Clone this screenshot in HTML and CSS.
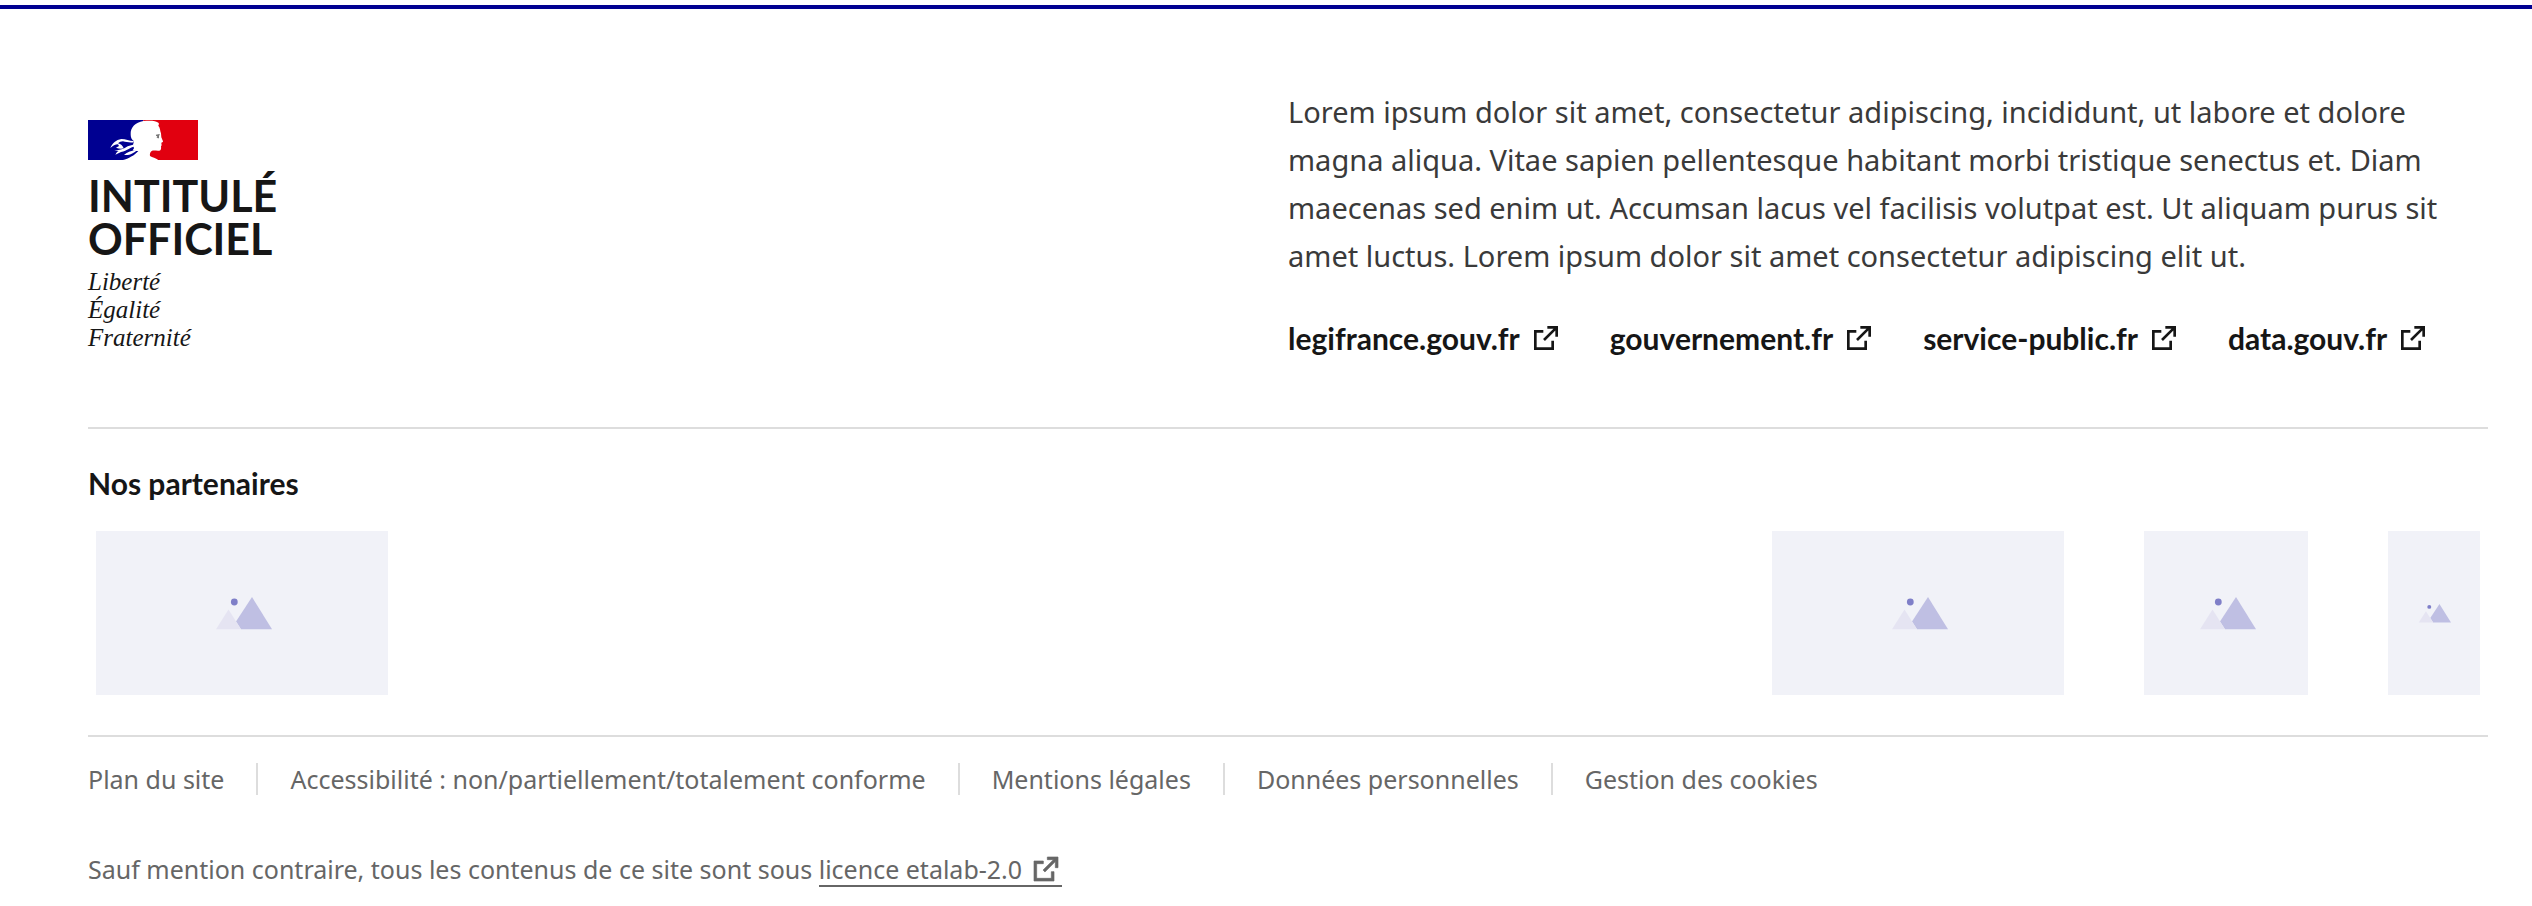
FILE: index.html
```
<!DOCTYPE html>
<html lang="fr">
<head>
<meta charset="utf-8">
<title>Intitulé officiel</title>
<link rel="stylesheet" href="styles.css">
</head>
<body>
<svg class="defs" aria-hidden="true">
  <symbol id="external" viewBox="0 0 24 24"><path d="M10 6v2H5v11h11v-5h2v7H3V6h7zm11-3v8h-2V6.4l-7.8 7.8-1.4-1.4L17.6 5H13V3h8z"/></symbol>
  <symbol id="mountains" viewBox="-3 0 59 33">
    <path fill="#bfbfe3" d="M36 0 56 32.300H25L20 24.500z"/>
    <path fill="#e5e4f2" d="M12.500 12.500 25 32.300H0z"/>
    <circle fill="#7f7fc8" cx="18.300" cy="5" r="3.400"/>
  </symbol>
</svg>
<footer class="footer">
  <div class="container">
    <div class="body">
      <a class="brand" href="#">
        <svg class="flag" viewBox="0 0 330 120" aria-hidden="true">
          <path fill="#000091" d="M0 0h166v120H0z"/>
          <path fill="#e1000f" d="M166 0h164v120H166z"/>
          <path fill="#fff" d="M128 43C127 22 142 7 166 3 184 1 204 1 212 9c2 4-1 7-1 8 6 6 5 16 8 23 1 4 0 8 1 12l5 12c0 4-4 3-5 5l1 7-2 3c1 8 0 12-5 13-9 1-17-2-23 1-5 4-6 9-5 15 7 4 17 7 25 12H105c16-4 35-14 46-27-6 0-12 1-17-2l4-6-3-11 3-10c-8-5-10-13-10-21z"/>
          <path fill="#fff" d="M67 84C73 70 84 59 100 57c13 0 24 6 37 6v4c-12 2-22-1-32-3-6 0-11 2-15 6 9 2 14 7 17 15-7 2-15 1-23-2l9-5-3-5c-8 0-16 5-23 11z"/>
          <path fill="#fff" d="M79 91c16 0 29-4 40-12l16-5 7 5c-14 2-24 14-43 17l-17 8 5-8 5-3zM108 105c9-9 24-14 40-15-11 9-22 17-40 15z"/>
          <path fill="none" stroke="#777" stroke-width="4" d="m204 46 11-2m-8 9 4-5v7"/>
        </svg>
        <span class="brand-name">INTITULÉ<br>OFFICIEL</span>
        <span class="motto">Liberté<br>Égalité<br>Fraternité</span>
      </a>
      <div class="content">
        <p class="desc">Lorem ipsum dolor sit amet, consectetur adipiscing, incididunt, ut labore et dolore magna aliqua. Vitae sapien pellentesque habitant morbi tristique senectus et. Diam maecenas sed enim ut. Accumsan lacus vel facilisis volutpat est. Ut aliquam purus sit amet luctus. Lorem ipsum dolor sit amet consectetur adipiscing elit ut.</p>
        <ul class="sites">
          <li><a href="#">legifrance.gouv.fr<svg class="icon"><use href="#external"/></svg></a></li>
          <li><a href="#">gouvernement.fr<svg class="icon"><use href="#external"/></svg></a></li>
          <li><a href="#">service-public.fr<svg class="icon"><use href="#external"/></svg></a></li>
          <li><a href="#">data.gouv.fr<svg class="icon"><use href="#external"/></svg></a></li>
        </ul>
      </div>
    </div>
    <section class="partners">
      <h2>Nos partenaires</h2>
      <div class="logos">
        <a class="logo wide main" href="#" aria-label="Partenaire principal"><svg><use href="#mountains"/></svg></a>
        <a class="logo wide" href="#" aria-label="Partenaire"><svg><use href="#mountains"/></svg></a>
        <a class="logo square" href="#" aria-label="Partenaire"><svg><use href="#mountains"/></svg></a>
        <a class="logo narrow" href="#" aria-label="Partenaire"><svg><use href="#mountains"/></svg></a>
      </div>
    </section>
    <div class="bottom">
      <ul class="legal">
        <li><a href="#">Plan du site</a></li>
        <li><a href="#">Accessibilité : non/partiellement/totalement conforme</a></li>
        <li><a href="#">Mentions légales</a></li>
        <li><a href="#">Données personnelles</a></li>
        <li><a href="#">Gestion des cookies</a></li>
      </ul>
      <p class="licence">Sauf mention contraire, tous les contenus de ce site sont sous <a href="#">licence etalab-2.0<svg class="icon"><use href="#external"/></svg></a></p>
    </div>
  </div>
</footer>
</body>
</html>
```
FILE: styles.css
```
* { box-sizing: border-box; }
body, h2, p, ul { margin: 0; padding: 0; }
ul { list-style: none; }
a { color: inherit; text-decoration: none; }
body {
  padding-top: 5px;
  background: #fff;
  color: #161616;
  font-family: "Noto Sans", "Open Sans", sans-serif;
  font-size: 29px;
  line-height: 48px;
}
.defs { position: absolute; width: 0; height: 0; }
.footer { border-top: 4px solid #000091; }
.container { padding: 79px 44px 0 88px; }
.body {
  display: grid;
  grid-template-columns: 1fr 1fr;
  align-items: start;
  padding-bottom: 65px;
}
.brand { display: flex; flex-direction: column; justify-self: start; padding-top: 32px; }
.flag { width: 110px; height: 40px; }
.brand-name {
  margin-top: 14px;
  font-family: Lato, sans-serif;
  font-size: 43px;
  font-weight: 700;
  line-height: 43px;
}
.motto {
  margin-top: 8px;
  font-family: "Liberation Serif", serif;
  font-size: 25px;
  font-style: italic;
  line-height: 28px;
}
.desc { color: #3a3a3a; padding-right: 48px; }
.sites {
  display: flex;
  flex-wrap: wrap;
  column-gap: 48px;
  margin-top: 34px;
  font-family: Lato, sans-serif;
  font-size: 30px;
  font-weight: 700;
}
.sites a { display: flex; align-items: center; }
.icon { width: 32px; height: 32px; margin-left: 10px; fill: currentColor; }
.partners { border-top: 2px solid #ddd; padding: 30px 8px 40px 0; }
.partners h2 { font-family: Lato, sans-serif; font-size: 30px; line-height: 48px; }
.logos { display: flex; gap: 80px; margin-top: 24px; padding-left: 8px; }
.logo { display: flex; align-items: center; justify-content: center; height: 164px; background: #f1f2f8; }
.logo svg { width: 59px; height: 33px; }
.wide { width: 292px; }
.main { margin-right: auto; }
.square { width: 164px; }
.narrow { width: 92px; }
.narrow svg { width: 34px; height: 19px; }
.bottom { border-top: 2px solid #ddd; padding-top: 22px; color: #666; font-size: 25px; line-height: 40px; }
.legal { display: flex; flex-wrap: wrap; }
.legal li { display: flex; align-items: center; }
.legal li + li::before { content: ""; width: 2px; height: 32px; margin: 0 32px; background: #ddd; }
.licence { margin-top: 50px; }
.licence a { display: inline-flex; align-items: center; line-height: 32px; border-bottom: 2px solid; }
.licence .icon { margin-left: 8px; stroke: currentColor; stroke-width: 0.5; }
```
